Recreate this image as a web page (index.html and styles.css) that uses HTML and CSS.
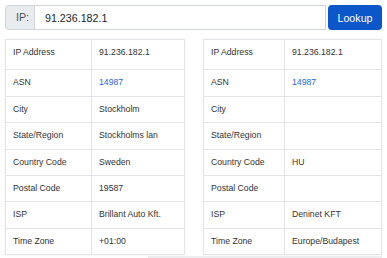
FILE: index.html
```html
<!DOCTYPE html>
<html lang="en">
<head>
	<meta charset="UTF-8">
	<title>IP Lookup</title>
	<link rel="stylesheet" href="styles.css">
</head>
<body>
	<section class="warp">
		<form class="searchBar" action="">
			<span class="ipLabel">IP:</span>
			<input type="text" class="searchIpt" value="91.236.182.1">
			<input type="button" value="Lookup" class="btnIpt">
		</form>
		<section class="results">
			<table class="infoTable">
				<tr class="firstRow"><td>IP Address</td><td>91.236.182.1</td></tr>
				<tr><td>ASN</td><td><a href="javascript:;">14987</a></td></tr>
				<tr><td>City</td><td>Stockholm</td></tr>
				<tr><td>State/Region</td><td>Stockholms lan</td></tr>
				<tr><td>Country Code</td><td>Sweden</td></tr>
				<tr><td>Postal Code</td><td>19587</td></tr>
				<tr><td>ISP</td><td>Brillant Auto Kft.</td></tr>
				<tr><td>Time Zone</td><td>+01:00</td></tr>
			</table>
			<table class="infoTable rightTable">
				<tr class="firstRow"><td>IP Address</td><td>91.236.182.1</td></tr>
				<tr><td>ASN</td><td><a href="javascript:;">14987</a></td></tr>
				<tr><td>City</td><td></td></tr>
				<tr><td>State/Region</td><td></td></tr>
				<tr><td>Country Code</td><td>HU</td></tr>
				<tr><td>Postal Code</td><td></td></tr>
				<tr><td>ISP</td><td>Deninet KFT</td></tr>
				<tr><td>Time Zone</td><td>Europe/Budapest</td></tr>
			</table>
		</section>
		<div class="bottomBar"></div>
	</section>
</body>
</html>
```

FILE: styles.css
```css
body{
	margin:0;
	font-family:"Liberation Sans", Arial, sans-serif;
	background:#fff;
}
input{
	border:0;
	outline:none;
	font-family:inherit;
}
.warp{
	padding:5px 5px 0 5px;
	width:377px;
}
.searchBar{
	display:flex;
	height:25px;
	margin:0;
}
.ipLabel{
	width:30px;
	box-sizing:border-box;
	padding-left:10px;
	background:#e9ecef;
	border:1px solid #ced4da;
	border-radius:4px 0 0 4px;
	font-size:10.7px;
	line-height:23px;
	color:#495057;
}
.searchIpt{
	flex:1;
	min-width:0;
	padding:0 10px;
	border:1px solid #ced4da;
	border-left:0;
	font-size:10.7px;
	color:#212529;
}
.btnIpt{
	width:54px;
	margin-left:2px;
	background:#0b56c9;
	color:#fff;
	font-size:10.7px;
	border-radius:4px;
	cursor:pointer;
	padding:0;
}
.results{
	display:flex;
	justify-content:space-between;
	margin-top:9px;
}
.infoTable{
	width:180px;
	table-layout:fixed;
	border-collapse:collapse;
	font-size:8.7px;
	color:#333;
	background:#fff;
	box-shadow:0 0 3px rgba(0,0,0,.06);
}
.infoTable td{
	border:1px solid #e3e5e8;
	padding:7px 6px 7px 7px;
	line-height:11.4px;
	white-space:nowrap;
	overflow:hidden;
}
.infoTable td:first-child{
	width:72px;
}
.rightTable{
	width:179px;
}
.rightTable td:first-child{
	width:67px;
}
.infoTable .firstRow td{
	padding-bottom:11px;
}
.infoTable a{
	color:#1f66d9;
	text-decoration:none;
}
.bottomBar{
	margin:1px 0 0 143px;
	height:4px;
	background:#eceeef;
}
```
